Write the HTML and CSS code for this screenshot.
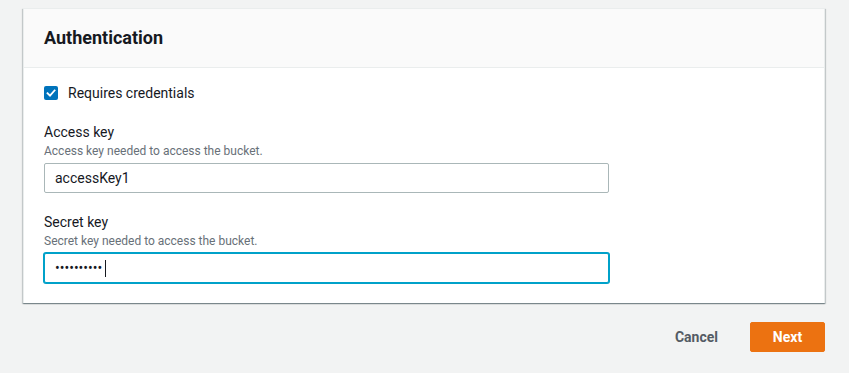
FILE: index.html
```html
<!DOCTYPE html>
<html lang="en">
<head>
    <meta charset="UTF-8">
    <meta name="viewport" content="width=device-width, initial-scale=1.0">
    <title>Authentication</title>
    <link rel="stylesheet" href="styles.css">
</head>
<body>
    <div id="page">
        <div class="card">
            <div class="card-header">
                <h2>Authentication</h2>
            </div>
            <div class="card-body">
                <label class="checkbox-row">
                    <span class="checkbox">
                        <svg width="10" height="10" viewBox="0 0 10 10">
                            <path d="M1.5 5.2 L4 7.6 L8.6 2.4" fill="none" stroke="#fff" stroke-width="1.8" stroke-linecap="square"/>
                        </svg>
                    </span>
                    Requires credentials
                </label>

                <div class="field">
                    <div class="field-label">Access key</div>
                    <div class="field-desc">Access key needed to access the bucket.</div>
                    <input class="text-input" type="text" value="accessKey1">
                </div>

                <div class="field">
                    <div class="field-label">Secret key</div>
                    <div class="field-desc">Secret key needed to access the bucket.</div>
                    <div class="input-wrap">
                        <input class="text-input focused" type="password" value="secretKey1">
                        <span class="caret"></span>
                    </div>
                </div>
            </div>
        </div>

        <div id="actions">
            <button class="btn-link">Cancel</button>
            <button class="btn-primary">Next</button>
        </div>
    </div>
</body>
</html>
```

FILE: styles.css
```css
html, body {
    margin: 0;
    background-color: #fff;
}
body {
    font-family: Roboto, "Liberation Sans", Arial, sans-serif;
    font-size: 14px;
    color: #16191f;
}
#page {
    background-color: #f2f3f3;
    padding: 8px 24px 21px 23px;
}
.card {
    background-color: #fff;
    border: 1px solid #eaeded;
    border-bottom: none;
    box-shadow: 0 1px 1px 0 rgba(0, 28, 36, 0.3), 1px 1px 1px 0 rgba(0, 28, 36, 0.15), -1px 1px 1px 0 rgba(0, 28, 36, 0.15);
}
.card-header {
    background-color: #fafafa;
    border-bottom: 1px solid #eaeded;
    padding: 18px 20px;
}
.card-header h2 {
    margin: 0;
    font-size: 18px;
    line-height: 22px;
    font-weight: bold;
}
.card-body {
    padding: 15px 20px 20px;
}
.checkbox-row {
    display: flex;
    align-items: center;
    gap: 10px;
    line-height: 20px;
}
.checkbox {
    width: 14px;
    height: 14px;
    border-radius: 2px;
    background-color: #0073bb;
    display: flex;
    align-items: center;
    justify-content: center;
}
.field {
    margin-top: 18px;
}
.field-label {
    line-height: 22px;
}
.field-desc {
    font-size: 12px;
    line-height: 16px;
    color: #687078;
    margin-bottom: 4px;
}
.input-wrap {
    position: relative;
    width: 565px;
}
.text-input {
    display: block;
    box-sizing: border-box;
    width: 565px;
    height: 30px;
    padding: 4px 10px;
    border: 1px solid #aab7b8;
    border-radius: 2px;
    font-family: inherit;
    font-size: 14px;
    color: #16191f;
    outline: none;
}
.text-input.focused {
    border-color: #00a1c9;
    box-shadow: 0 0 0 1px #00a1c9;
}
.caret {
    position: absolute;
    left: 61px;
    top: 7px;
    width: 1px;
    height: 17px;
    background-color: #16191f;
}
#actions {
    display: flex;
    justify-content: flex-end;
    align-items: center;
    gap: 12px;
    margin-top: 19px;
}
.btn-link, .btn-primary {
    font-family: inherit;
    font-size: 14px;
    font-weight: bold;
    height: 30px;
    padding: 0 20px;
    border-radius: 2px;
    cursor: pointer;
}
.btn-link {
    background: none;
    border: none;
    color: #545b64;
}
.btn-primary {
    background-color: #ec7211;
    border: 1px solid #ec7211;
    color: #fff;
    width: 75px;
}
```
